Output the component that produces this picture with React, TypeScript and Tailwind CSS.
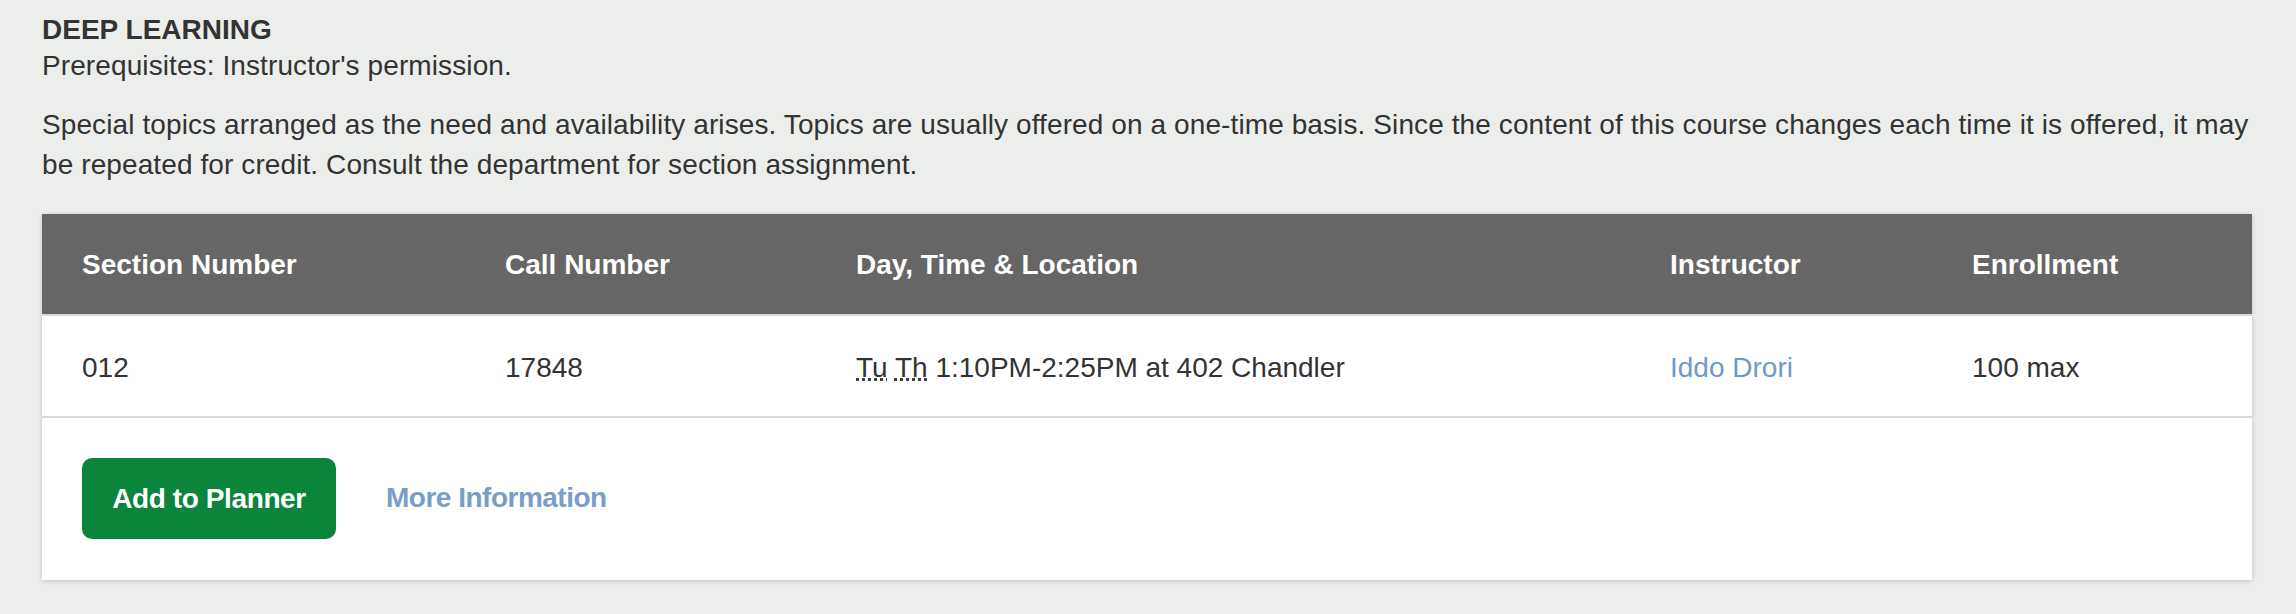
import React from "react";

const columns = [
  "Section Number",
  "Call Number",
  "Day, Time & Location",
  "Instructor",
  "Enrollment",
];

export default function App() {
  return (
    <div className="min-h-screen bg-[#eceeec] pl-[42px] pr-[44px] pt-[12px] pb-8 font-['Liberation_Sans',Arial,sans-serif] text-[28px] text-[#333333]">
      {/* Course heading */}
      <h2 className="font-bold leading-[36px]">DEEP LEARNING</h2>
      <p className="leading-[36px] tracking-[0.1px]">
        Prerequisites: Instructor's permission.
      </p>
      <p className="mt-[21px] leading-[40px] tracking-[0.1px]">
        Special topics arranged as the need and availability arises. Topics are
        usually offered on a one-time basis. Since the content of this course
        changes each time it is offered, it may be repeated for credit. Consult
        the department for section assignment.
      </p>

      {/* Sections table */}
      <div className="mt-[29px] bg-white shadow-[0_1px_5px_rgba(0,0,0,0.18)]">
        <div className="grid grid-cols-[423px_351px_814px_302px_1fr] bg-[#666666] h-[100px] items-center font-bold text-white">
          {columns.map((col) => (
            <div key={col} className="pl-[40px] pt-[2px]">
              {col}
            </div>
          ))}
        </div>
        <div className="grid grid-cols-[423px_351px_814px_302px_1fr] h-[104px] items-center border-t-2 border-b-2 border-[#d9d9d9]">
          <div className="pl-[40px] pt-[3px]">012</div>
          <div className="pl-[40px] pt-[3px]">17848</div>
          <div className="pl-[40px] pt-[3px]">
            <abbr title="Tuesday" className="underline decoration-dotted">
              Tu
            </abbr>{" "}
            <abbr title="Thursday" className="underline decoration-dotted">
              Th
            </abbr>{" "}
            1:10PM-2:25PM at 402 Chandler
          </div>
          <div className="pl-[40px] pt-[3px]">
            <a href="#" className="text-[#7099c6]">
              Iddo Drori
            </a>
          </div>
          <div className="pl-[40px] pt-[3px]">100 max</div>
        </div>

        {/* Actions */}
        <div className="flex items-center gap-[50px] pl-[40px] pt-[40px] pb-[41px]">
          <button className="h-[81px] w-[254px] rounded-[10px] bg-[#0b843c] font-bold tracking-[-0.4px] text-white">
            Add to Planner
          </button>
          <a
            href="#"
            className="-mt-[2px] font-bold tracking-[-0.5px] text-[#7a9dc8]"
          >
            More Information
          </a>
        </div>
      </div>
    </div>
  );
}
